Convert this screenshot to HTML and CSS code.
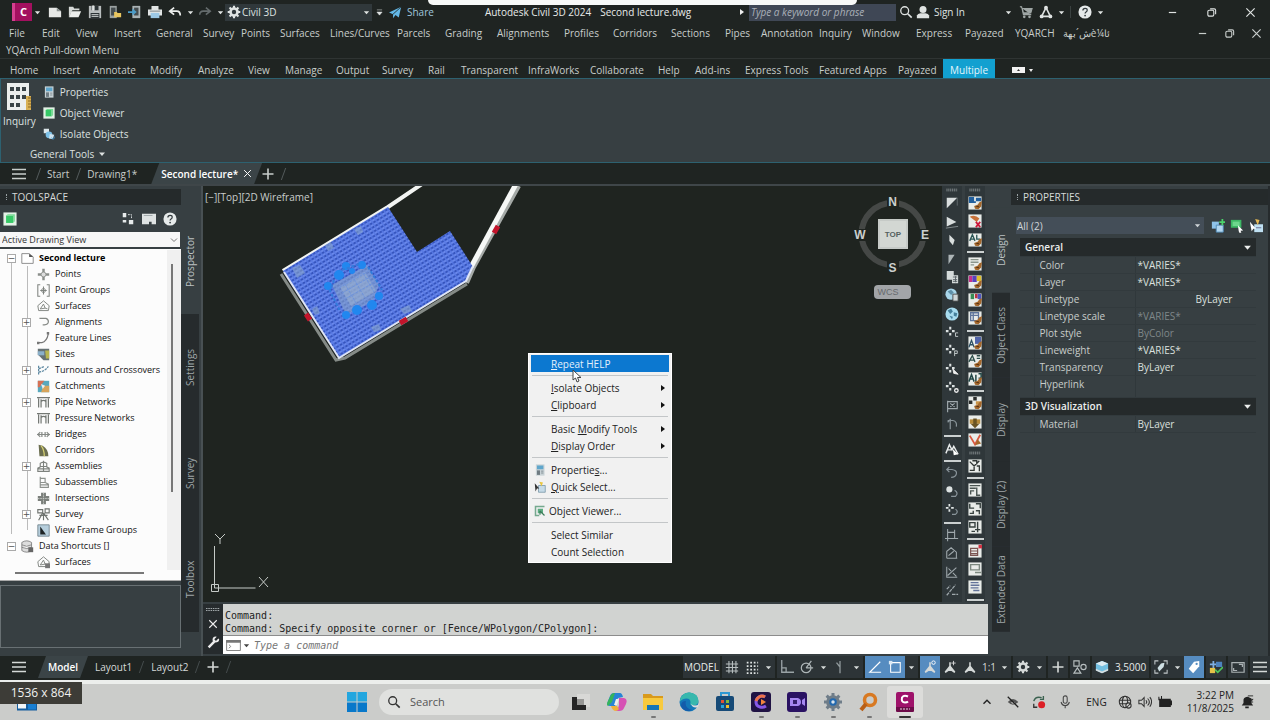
FILE: index.html
```html
<!DOCTYPE html>
<html lang="en">
<head>
<meta charset="utf-8">
<title>Autodesk Civil 3D 2024 - Second lecture.dwg</title>
<link rel="stylesheet" href="styles.css">
</head>
<body>
<svg class="defs" aria-hidden="true">
  <symbol id="caret" viewBox="0 0 8 8"><path d="M1 2.500h6L4 6z" fill="currentColor"/></symbol>
  <symbol id="x" viewBox="0 0 12 12"><path d="M1.500 1.500l9 9m0-9l-9 9" stroke="currentColor" stroke-width="1.300"/></symbol>
  <symbol id="min" viewBox="0 0 12 12"><path d="M2 6h8" stroke="currentColor" stroke-width="1.300"/></symbol>
  <symbol id="restore" viewBox="0 0 12 12"><g fill="none" stroke="currentColor" stroke-width="1.200"><rect x="2" y="3.500" width="6.500" height="6.500" rx="1.500"/><path d="M4.500 2h4.500q1.500 0 1.500 1.500v4.500"/></g></symbol>
  <symbol id="plus" viewBox="0 0 12 12"><path d="M6 .5v11M.5 6h11" stroke="currentColor" stroke-width="1.600"/></symbol>
  <symbol id="burger" viewBox="0 0 14 12"><path d="M0 1.500h14M0 6h14M0 10.500h14" stroke="currentColor" stroke-width="1.400"/></symbol>
  <symbol id="gear" viewBox="0 0 16 16"><circle cx="8" cy="8" r="4" fill="none" stroke="currentColor" stroke-width="3"/><g stroke="currentColor" stroke-width="2.400"><path d="M8 .8v3M8 12.200v3M.8 8h3M12.200 8h3M2.900 2.900l2 2M11.100 11.100l2 2M13.100 2.900l-2 2M4.900 11.100l-2 2"/></g></symbol>
  <symbol id="lens" viewBox="0 0 16 16"><circle cx="6.500" cy="6.500" r="4.500" fill="none" stroke="currentColor" stroke-width="1.500"/><path d="M10 10l4.500 4.500" stroke="currentColor" stroke-width="1.900"/></symbol>
  <symbol id="help" viewBox="0 0 16 16"><circle cx="8" cy="8" r="7.500" fill="#e6eaea"/><path d="M5.600 6.300q0-2.500 2.500-2.500t2.400 2.200q0 1.200-1.300 2-1.100.7-1.100 1.600" fill="none" stroke="#30383b" stroke-width="1.400"/><circle cx="8.100" cy="12" r="1" fill="#30383b"/></symbol>
  <symbol id="props" viewBox="0 0 16 16"><rect x="2.500" y=".5" width="11.500" height="15" fill="#c8d2d6"/><rect x="4" y="2" width="8.500" height="5" fill="#5fa6cc"/><rect x="4" y="8.500" width="4" height="6" fill="#6f7b82"/><path d="M9.500 9.500h3M9.500 12h3" stroke="#6f7b82"/></symbol>
  <symbol id="viewer" viewBox="0 0 16 16"><rect x=".5" y=".5" width="15" height="15" fill="#e3f1e6"/><rect x="3.500" y="4" width="8" height="8.500" fill="#37c967"/><path d="M3.500 4l2-1.500h8v8l-2 2V4z" fill="#78db95"/></symbol>
  <symbol id="grip" viewBox="0 0 14 5"><path d="M0 1.500h14M0 3.500h14" stroke="#a2a9ab" stroke-width="1" stroke-dasharray="1.500 .8"/></symbol>
  <symbol id="tile" viewBox="0 0 16 16"><rect x=".5" y=".5" width="15" height="15" fill="#e9ece9"/></symbol>
  <symbol id="brush" viewBox="0 0 16 16"><path d="M16 6l-3 1-2 3-4 1.500 1 3 4 .5 3-3z" fill="#a5682c"/><path d="M8 12l4-1 1 2" fill="#593414"/></symbol>
  <symbol id="person" viewBox="0 0 16 16"><path d="M8 2.500v5M8 7l-5.500 7 5.500-3.500 5.500 3.500L8 7" fill="currentColor" stroke="currentColor" stroke-width="1.800"/></symbol>
  <symbol id="star" viewBox="0 0 16 16"><path d="M6 2v3M6 9v3M1 7h3M8 7h3" stroke="#dce2e2" stroke-width="2.400"/></symbol>
  <symbol id="pipe" viewBox="0 0 16 16"><path d="M0 2h16M2 3v11M5 4v10M11 4v10M14 3v11M5 7q3-3 6 0" fill="none" stroke="#747874" stroke-width="1.500"/></symbol>
  <symbol id="house" viewBox="0 0 16 16"><path d="M2 13l-1-6 7-6 7 6-1 6zM4 11l4-6 2 5 3 1M4 11l6-1" fill="none" stroke="#858985" stroke-width="1.200"/></symbol>
</svg>

<header class="titlebar">
  <button class="logo" aria-label="Application menu">C</button>
  <button class="cr"><svg><use href="#caret"/></svg></button>
  <div class="quick">
    <button aria-label="New"><svg viewBox="0 0 16 16"><path d="M1 3h9l5 4v7H1z" fill="#e6e8e6"/><path d="M10 3v4h5" fill="#8b9291"/></svg></button>
    <button aria-label="Open"><svg viewBox="0 0 16 16"><path d="M1 14V2h5l1 2h6v2H5z" fill="#d6dad8"/><path d="M4 7h11l-3 7H1z" fill="#eceeec"/></svg></button>
    <button aria-label="Save"><svg viewBox="0 0 16 16"><path d="M1 1h14v14H1z" fill="#b8bdbd"/><path d="M4 1h8v5H4zM3 9h10v6H3z" fill="#2c3335"/><path d="M5 1h2v5H5zM4 11h8M4 13h8" stroke="#dfe2e1" fill="#dfe2e1"/></svg></button>
    <button aria-label="Open from mobile"><svg viewBox="0 0 16 16"><path d="M2 1h8v14H2z" fill="#9ba2a2"/><path d="M3.500 3h5v9h-5z" fill="#444c4f"/><path d="M7 8h3l1 1h4v5H7z" fill="#e9c65f"/></svg></button>
    <button aria-label="Save to mobile"><svg viewBox="0 0 16 16"><path d="M5 1h9v14H5z" fill="#aab2b4"/><path d="M7 3h5v9H7z" fill="#444c4f"/><path d="M0 7h5V4l5 4-5 4V9H0z" fill="#4b9cc8"/></svg></button>
    <button aria-label="Plot"><svg viewBox="0 0 16 16"><path d="M4 1h8v4H4zM0 5h16v7H0z" fill="#e2e5e5"/><path d="M3 9h10v6H3z" fill="#9cc9e6"/><path d="M2 7h12" stroke="#707a7f"/></svg></button>
    <button aria-label="Undo"><svg viewBox="0 0 16 16"><path d="M7 3L2 7l5 4M2 7h8q4 0 4 5" fill="none" stroke="#eceeed" stroke-width="2"/></svg></button>
  </div>
  <button class="cr"><svg><use href="#caret"/></svg></button>
  <button class="ib dim" aria-label="Redo"><svg viewBox="0 0 16 16"><path d="M9 3l5 4-5 4M14 7H6q-4 0-4 4" fill="none" stroke="currentColor" stroke-width="1.800"/></svg></button>
  <button class="cr"><svg><use href="#caret"/></svg></button>
  <label class="space"><svg><use href="#gear"/></svg><select aria-label="Workspace"><option>Civil 3D</option></select><svg class="sc"><use href="#caret"/></svg></label>
  <button class="cr wide" aria-label="Customize"><svg viewBox="0 0 8 8"><path d="M1 1h6M1 3.500h6L4 7z" fill="currentColor" stroke="currentColor" stroke-width=".6"/></svg></button>
  <button class="share"><svg viewBox="0 0 16 16"><path d="M0 8L15 1l-3 13-4-3-3 4v-5z" fill="#63b9e8"/><path d="M15 1L5 10" stroke="#1f2422"/></svg>Share</button>
  <h1><span>Autodesk Civil 3D 2024</span><span>Second lecture.dwg</span></h1>
  <svg class="rt" viewBox="0 0 8 8"><path d="M2 1l4 3-4 3z" fill="#eee"/></svg>
  <input class="find" type="text" placeholder="Type a keyword or phrase" aria-label="Search help">
  <button class="ib" aria-label="Search"><svg><use href="#lens"/></svg></button>
  <button class="sign"><svg viewBox="0 0 16 16"><circle cx="8" cy="5" r="4" fill="currentColor"/><path d="M1 15v-3q1-2 4-2.500h6q3 .5 4 2.500v3z" fill="currentColor"/></svg>Sign In<svg class="sc"><use href="#caret"/></svg></button>
  <button class="ib" aria-label="Store"><svg viewBox="0 0 16 16"><path d="M1 2h2l2 9h9M4 4h11l-1.500 5H5z" fill="#9fa6a5" stroke="#9fa6a5" stroke-width="1.200"/><circle cx="6" cy="13.500" r="1.500" fill="#9fa6a5"/><circle cx="12" cy="13.500" r="1.500" fill="#9fa6a5"/></svg></button>
  <button class="ib" aria-label="Apps"><svg viewBox="0 0 16 16"><path d="M8 3L3 13h10z" fill="none" stroke="currentColor" stroke-width="1.800"/><circle cx="8" cy="3" r="2.200" fill="currentColor"/><circle cx="3" cy="13" r="2.200" fill="currentColor"/><circle cx="13" cy="13" r="2.200" fill="currentColor"/></svg></button>
  <button class="cr"><svg><use href="#caret"/></svg></button>
  <i class="bar"></i>
  <button class="ib" aria-label="Help"><svg><use href="#help"/></svg></button>
  <button class="cr"><svg><use href="#caret"/></svg></button>
  <div class="win"><button aria-label="Minimize"><svg><use href="#min"/></svg></button><button aria-label="Restore"><svg><use href="#restore"/></svg></button><button aria-label="Close"><svg><use href="#x"/></svg></button></div>
</header>
<div class="notch"></div>

<nav class="menus">
  <button>File</button><button>Edit</button><button>View</button><button>Insert</button><button>General</button><button>Survey</button><button>Points</button><button>Surfaces</button><button>Lines/Curves</button><button>Parcels</button><button>Grading</button><button>Alignments</button><button>Profiles</button><button>Corridors</button><button>Sections</button><button>Pipes</button><button>Annotation</button><button>Inquiry</button><button>Window</button><button>Express</button><button>Payazed</button><button>YQARCH</button><button><span dir="rtl">ئا¼èش´بهة</span></button>
  <div class="docwin"><button aria-label="Minimize drawing"><svg><use href="#min"/></svg></button><button aria-label="Restore drawing"><svg><use href="#restore"/></svg></button><button aria-label="Close drawing"><svg><use href="#x"/></svg></button></div>
</nav>
<nav class="menus2"><button>YQArch Pull-down Menu</button></nav>

<nav class="ribtabs">
  <button>Home</button><button>Insert</button><button>Annotate</button><button>Modify</button><button>Analyze</button><button>View</button><button>Manage</button><button>Output</button><button>Survey</button><button>Rail</button><button>Transparent</button><button>InfraWorks</button><button>Collaborate</button><button>Help</button><button>Add-ins</button><button>Express Tools</button><button>Featured Apps</button><button>Payazed</button><button class="on">Multiple</button><button class="more" aria-label="Ribbon display"><svg viewBox="0 0 22 8"><path d="M0 1h13v6H0z" fill="#f2f2f2"/><path d="M5 5h3L6.500 3z" fill="#333"/><path d="M17 3h4l-2 3z" fill="#eee"/></svg></button>
</nav>

<section class="ribbon">
  <div class="tools">
    <button class="inq"><svg viewBox="0 0 24 28"><path d="M0 0h22v27H0z" fill="#eceeed"/><path d="M3 4h4v4H3zM9 4h4v4H9zM15 4h4v4h-4zM3 12h4v4H3zM9 12h4v4H9zM15 12h4v4h-4zM3 20h4v4H3zM9 20h4v4H9z" fill="#3a4346"/><path d="M19 13h5v14h-5z" fill="#d9b054"/><path d="M21 15h3M21 18h3M21 21h3M21 24h3" stroke="#8f6a20"/></svg>Inquiry</button>
    <div class="list">
      <button><svg><use href="#props"/></svg>Properties</button>
      <button><svg><use href="#viewer"/></svg>Object Viewer</button>
      <button><svg viewBox="0 0 16 16"><path d="M1 1h7v6H1z" fill="#dce6ea"/><circle cx="8" cy="9" r="4.500" fill="#7cc0e6"/><path d="M9 8l6 1-2 6-5-1z" fill="#cfe4f0"/><path d="M11 13l3 2 2-4" stroke="#3693cf" fill="none"/></svg>Isolate Objects</button>
    </div>
  </div>
  <button class="gt">General Tools <svg><use href="#caret"/></svg></button>
</section>

<nav class="filetabs">
  <button class="bg" aria-label="Tabs menu"><svg><use href="#burger"/></svg></button>
  <i class="sl"></i><button>Start</button><i class="sl"></i><button class="d1">Drawing1*</button>
  <div class="cur"><button>Second lecture*</button><button aria-label="Close tab"><svg><use href="#x"/></svg></button></div>
  <button class="add" aria-label="New tab"><svg><use href="#plus"/></svg></button><i class="sl"></i>
</nav>

<main class="work">
  <section class="toolspace">
    <h2>TOOLSPACE</h2>
    <div class="tsbar">
      <button aria-label="Drawing"><svg><use href="#viewer"/></svg></button>
      <button class="r" aria-label="Item view"><svg viewBox="0 0 16 16"><path d="M2 1h4v5H2zM9 9h5v5H9zM2 9h4v3H2z" fill="#e6eaea"/><path d="M8 3h4v4" fill="none" stroke="#e6eaea" stroke-dasharray="2 1"/></svg></button>
      <button aria-label="Panorama"><svg viewBox="0 0 16 16"><path d="M0 2h16v12h-5v-3H8v3H0z" fill="#dfe3e3"/><path d="M2 4h10" stroke="#9aa2a5"/></svg></button>
      <button aria-label="Help"><svg><use href="#help"/></svg></button>
    </div>
    <label class="tsview"><select aria-label="View"><option>Active Drawing View</option></select><svg viewBox="0 0 8 8"><path d="M1 2.500l3 3 3-3" fill="none" stroke="#777"/></svg></label>
    <div class="treebox">
      <ul class="tree">
        <li class="root b"><button class="tg" aria-label="Collapse">−</button><svg viewBox="0 0 16 16"><path d="M1 2h9l5 4v8H1z" fill="#fff" stroke="#777"/><path d="M10 2v4h5z" fill="#555"/></svg>Second lecture</li>
        <li><svg viewBox="0 0 16 16"><path d="M8 1v14M1 8h14" stroke="#8a8e8a" stroke-width="3"/><circle cx="8" cy="8" r="3" fill="#ddd" stroke="#8a8e8a"/></svg>Points</li>
        <li><svg viewBox="0 0 16 16"><path d="M4 1H1v14h3M12 1h3v14h-3M8 3v10M4 8h8" fill="none" stroke="#808480" stroke-width="1.300"/><circle cx="8" cy="8" r="2.500" fill="none" stroke="#808480"/></svg>Point Groups</li>
        <li><svg><use href="#house"/></svg>Surfaces</li>
        <li class="k"><button class="tg" aria-label="Expand">+</button><svg viewBox="0 0 16 16"><path d="M3 3h8q3 1 3 4t-5 4H7" fill="none" stroke="#858985" stroke-width="1.500"/></svg>Alignments</li>
        <li><svg viewBox="0 0 16 16"><path d="M1 13h5q6-1 8-11" fill="none" stroke="#777" stroke-width="1.500"/><path d="M0 12h3v3H0zM12 0h3v3h-3z" fill="#777"/></svg>Feature Lines</li>
        <li><svg viewBox="0 0 16 16"><path d="M1 1h14v14H8L1 8z" fill="#667173"/><path d="M1 4h8v5H1z" fill="#8bb0ca"/><path d="M10 3h5v10h-4z" fill="#b9b64f"/></svg>Sites</li>
        <li class="k"><button class="tg" aria-label="Expand">+</button><svg viewBox="0 0 16 16"><path d="M2 2v12M2 10q8-1 12-7M2 6l7-3" fill="none" stroke="#5d88a1" stroke-width="1.500" stroke-dasharray="3 1"/></svg>Turnouts and Crossovers</li>
        <li><svg viewBox="0 0 16 16"><path d="M1 1h14v14H1z" fill="#58a8bd"/><path d="M1 1h8L3 9H1z" fill="#d77154"/><path d="M8 7h7v8H5z" fill="#d7a45b"/><path d="M5 5l5 2-3 4z" fill="#eee"/></svg>Catchments</li>
        <li class="k"><button class="tg" aria-label="Expand">+</button><svg><use href="#pipe"/></svg>Pipe Networks</li>
        <li><svg><use href="#pipe"/></svg>Pressure Networks</li>
        <li><svg viewBox="0 0 16 16"><path d="M0 8h16M4 5L1 8l3 3M12 5l3 3-3 3M6 5v6M10 5v6" fill="none" stroke="#858985" stroke-width="1.500"/></svg>Bridges</li>
        <li><svg viewBox="0 0 16 16"><path d="M2 1l5 1q7 4 7 13H3z" fill="#6b6e50"/><path d="M5 2q4 5 4 13" fill="none" stroke="#d4cf72" stroke-width="1.500"/></svg>Corridors</li>
        <li class="k"><button class="tg" aria-label="Expand">+</button><svg viewBox="0 0 16 16"><path d="M1 14v-4l4-2h6l4 2v4zM8 1v13M4 8V4l4-2 4 2v4M1 11h14" fill="none" stroke="#7d817d" stroke-width="1.400"/></svg>Assemblies</li>
        <li><svg viewBox="0 0 16 16"><path d="M4 1v13h10v-4l-4-2V3H4M4 8h6M4 11h10" fill="none" stroke="#8d918d" stroke-width="1.400"/></svg>Subassemblies</li>
        <li><svg viewBox="0 0 16 16"><path d="M5 1h6v4h4v6h-4v4H5v-4H1V5h4z" fill="#7b7f7b"/><path d="M8 1v14M1 8h14" stroke="#c9ccc9" stroke-dasharray="2 1"/></svg>Intersections</li>
        <li class="k"><button class="tg" aria-label="Expand">+</button><svg viewBox="0 0 16 16"><path d="M1 2h6v4H1zM10 1h5v5h-5zM7 6l-5 9M8 6v9M8 6l6 9M3 9h10" fill="none" stroke="#6f736f" stroke-width="1.400"/></svg>Survey</li>
        <li><svg viewBox="0 0 16 16"><path d="M1 1h14v14H1z" fill="#b6cedc" stroke="#6b7e88"/><path d="M4 3v10h7z" fill="#1e2426"/></svg>View Frame Groups</li>
        <li class="root"><button class="tg" aria-label="Collapse">−</button><svg viewBox="0 0 16 16"><path d="M1 3q6-4 12 0v10q-6 4-12 0zM1 6q6 3 12 0M1 9q6 3 12 0" fill="#ddd" stroke="#777"/><path d="M9 9h6v6H9z" fill="#666"/></svg>Data Shortcuts []</li>
        <li><svg viewBox="0 0 16 16"><use href="#house"/><path d="M10 9h6v6h-6z" fill="#777"/></svg>Surfaces</li>
      </ul>
      <i class="vbar"></i><i class="hbar"></i>
    </div>
    <div class="preview"></div>
  </section>
  <nav class="vtabs left"><button class="on">Prospector</button><button>Settings</button><button>Survey</button><button>Toolbox</button></nav>

  <div class="center">
    <div class="top">
      <section class="canvas">
        <svg class="drawing" viewBox="203 186 739 415" preserveAspectRatio="xMinYMin meet">
          <defs><pattern id="hatch" width="4" height="4" patternUnits="userSpaceOnUse" patternTransform="rotate(-31)"><path d="M0 0h4v4H0z" fill="#2a45a8"/><path d="M0 0h4v2H0z" fill="#7590ea"/><path d="M0 0h1.500v4H0z" fill="#5b7ae0"/></pattern></defs>
          <path d="M283 271L388 207L422 184" fill="none" stroke="#f2f4f2" stroke-width="4"/>
          <path d="M281 274L336 360L345 358L467 284" fill="none" stroke="#858b87" stroke-width="3"/>
          <path d="M519 186L474 267L467 283" fill="none" stroke="#a5aaa7" stroke-width="4"/>
          <path d="M516 184L471 267" stroke="#f6f8f6" stroke-width="5"/>
          <path d="M283 271L388 207L417 252L450 231L473 267L466 281L339 358z" fill="url(#hatch)"/>
          <path d="M283 271L388 207L417 252L450 231L473 267L466 281L339 358z" fill="#4f78f0" fill-opacity=".3"/>
          <path d="M284 272L339 358L466 281L473 266" fill="none" stroke="#dfe5f5" stroke-width="2"/>
          <g fill="#8ba7c8" opacity=".55"><path d="M292 268l8-3 5 8-8 5zM325 245l6-3 3 6-6 3zM354 229l7-3 2 6-5 3zM312 309l5-3 3 7-5 2zM371 327l8-3 2 6-7 2zM400 309l9-4 3 6-8 3z"/><path d="M332 285l35-20 12 20-6 16-27 14z"/></g>
          <path d="M340 287l25-15 11 19-25 15z" fill="#9cb2cf" opacity=".55"/>
          <path d="M339 288l30-17M342 293l30-17M345 299l30-17M345 284l11 19M354 279l11 19M363 273l11 19" stroke="#6d93dd" stroke-dasharray="3 1"/>
          <g fill="#2187ef"><circle cx="328" cy="286" r="4"/><circle cx="339" cy="275" r="5"/><circle cx="346" cy="266" r="4"/><circle cx="352" cy="271" r="3"/><circle cx="362" cy="265" r="4"/><circle cx="346" cy="315" r="4"/><circle cx="357" cy="310" r="5"/><circle cx="372" cy="305" r="5"/><circle cx="379" cy="296" r="4"/></g>
          <g fill="none" stroke="#317bdc" stroke-width="2" stroke-dasharray="3 2"><path d="M334 280l-4 11 10 20M368 267l7 11 7 12M342 270l17-6"/></g>
          <g stroke="#c2142b" stroke-width="5"><path d="M498 226l-4 7M400 323l7-4M306 314l4 6"/></g>
          <circle cx="892.500" cy="234" r="31" fill="none" stroke="#454846" stroke-width="6"/>
          <path d="M878 219h30v30h-30z" fill="#c6cac7"/><path d="M880 221h26v26h-26z" fill="#d3d7d3"/>
          <rect x="874" y="285" width="37" height="14" rx="4" fill="#a2a5a8"/>
          <g class="compass"><path d="M887 196h12v12h-12zM887 261h12v12h-12zM854 229h13v12h-13zM919 229h12v12h-12z" fill="#1f2420"/><text x="892.500" y="206">N</text><text x="892.500" y="272">S</text><text x="860" y="239">W</text><text x="925" y="239">E</text></g>
          <text class="cube" x="893" y="237">TOP</text><text class="wcs" x="888" y="295">WCS</text>
          <path d="M214.500 546v42h41M211.500 584.500h7v7h-7z" fill="none" stroke="#c5cac7"/>
          <path d="M215 534l5 5 5-5M220 539v5M259 577l9 10M268 577l-9 10" fill="none" stroke="#c5cac7"/>
        </svg>
        <div class="vp"><button>[−]</button><button>[Top]</button><button>[2D Wireframe]</button></div>
      </section>

      <div class="vt">
        <svg class="g"><use href="#grip"/></svg>
        <svg viewBox="0 0 16 16"><path d="M2 2h12L2 14z" fill="#d9dede"/><path d="M14 2v9" stroke="#666f72"/></svg>
        <svg viewBox="0 0 16 16"><path d="M2 2l11 6L2 13z" fill="#d9dede"/><path d="M1 15L15 13" stroke="#8d9597"/></svg>
        <svg viewBox="0 0 16 16"><path d="M5 2l6 6-2 6-4-5z" fill="#d9dede"/></svg>
        <svg viewBox="0 0 16 16"><path d="M4 3h7L4 14z" fill="#adb5b7"/></svg>
        <svg viewBox="0 0 16 16"><path d="M2 1h8v5h5v9H8v-4H2z" fill="#d4dada"/><path d="M9 8h5M9 11h5M9 13h5M12 7v7" stroke="#545d61"/></svg>
        <svg viewBox="0 0 16 16"><circle cx="7" cy="7" r="6.500" fill="#a9d6ea"/><path d="M3 4l4-2 3 3-3 3z" fill="#5e8fa8"/><path d="M9 7h6v8H9z" fill="#cfd6d8" stroke="#444"/></svg>
        <svg viewBox="0 0 16 16"><circle cx="8" cy="8" r="7.500" fill="#a8dcef"/><path d="M3 4l4-2 2 3-3 3zM10 6l4 1-1 4-3-1zM5 10l4 1-1 3z" fill="#457f9b"/></svg>
        <svg viewBox="0 0 16 16"><use href="#star"/><path d="M15 9h-3v4h3" fill="none" stroke="#ccd2d3"/></svg>
        <svg viewBox="0 0 16 16"><use href="#star"/><path d="M11 15V9h3v3h-3" fill="none" stroke="#ccd2d3"/></svg>
        <svg viewBox="0 0 16 16"><use href="#star"/><path d="M9 8l6 6-5-1z" fill="#eee" stroke="#eee"/></svg>
        <svg viewBox="0 0 16 16"><use href="#star"/><circle cx="13" cy="12" r="2" fill="none" stroke="#eee" stroke-width="1.500"/></svg>
        <svg viewBox="0 0 16 16"><path d="M3 2v13M3 3h11v8H3M6 5l5 4M11 5L6 9" fill="none" stroke="#a0a9ad" stroke-width="1.300"/></svg>
        <svg viewBox="0 0 16 16"><path d="M3 4h6q5 1 4 7M6 2v12M3 6l3-3" fill="none" stroke="#89949a" stroke-width="1.400"/></svg>
        <i></i>
        <svg viewBox="0 0 16 16"><path d="M1 13l4-10 3 6 2-4 5 9M2 9h5" fill="none" stroke="#e9eded" stroke-width="1.600"/><path d="M9 8l6 6-5 1z" fill="#fff"/></svg>
        <i></i>
        <svg viewBox="0 0 16 16"><path d="M3 4h5q6 1 5 5t-6 4M5 1L2 4l3 3" fill="none" stroke="#89949a" stroke-width="1.400"/></svg>
        <svg viewBox="0 0 16 16"><circle cx="5" cy="5" r="3.500" fill="#dce2e2"/><path d="M11 6q5 3 1 7H7" fill="none" stroke="#89949a" stroke-width="1.400"/></svg>
        <svg viewBox="0 0 16 16"><path d="M5 1v3M5 7v3M1 5.500h3M7 5.500h3" stroke="#e0e5e5" stroke-width="2"/><path d="M12 7q4 3 0 6H8" fill="none" stroke="#89949a" stroke-width="1.400"/></svg>
        <i></i>
        <svg viewBox="0 0 16 16"><path d="M3 1v14M0 12h15M3 5h8v7M11 2v3" fill="none" stroke="#a0a9ad" stroke-width="1.200"/></svg>
        <svg viewBox="0 0 16 16"><path d="M2 14V6l5-4 6 5v7M2 14h12M4 11l6-5" fill="none" stroke="#a0a9ad" stroke-width="1.200"/></svg>
        <svg viewBox="0 0 16 16"><path d="M2 2v12h12M3 12L13 3M4 4l3 3M9 9l4 4" fill="none" stroke="#a0a9ad" stroke-width="1.200"/></svg>
        <svg viewBox="0 0 16 16"><path d="M2 14L12 2M2 7l4-4M8 13h7" fill="none" stroke="#a0a9ad" stroke-width="1.400" stroke-dasharray="4 1"/></svg>
      </div>
      <div class="vt">
        <svg class="g"><use href="#grip"/></svg>
        <svg viewBox="0 0 16 16"><use href="#tile"/><path d="M1 1h6v5h8V2H9v6H1z" fill="#225f9d"/><use href="#brush"/></svg>
        <svg viewBox="0 0 16 16"><use href="#tile"/><path d="M2 3q6-3 11 2l-3 4z" fill="#c8723a"/><path d="M9 9l5 6M14 9l-5 6" stroke="#cc1739" stroke-width="2"/></svg>
        <svg viewBox="0 0 16 16"><use href="#tile"/><path d="M2 9l3-7 3 7M3 7h4M10 2v5h4" fill="none" stroke="#2a5554" stroke-width="1.500"/><use href="#brush"/></svg>
        <i></i>
        <svg viewBox="0 0 16 16"><use href="#tile"/><path d="M3 3h9M3 6h9M3 9h4" stroke="#8a958d" stroke-width="1.500"/><use href="#brush"/></svg>
        <svg viewBox="0 0 16 16"><use href="#tile"/><path d="M1 1h4v7H1z" fill="#c5308b"/><path d="M5 1h5v7H5z" fill="#5641bd"/><path d="M10 1h5v6h-5z" fill="#dfbf2b"/><use href="#brush"/></svg>
        <svg viewBox="0 0 16 16"><use href="#tile"/><path d="M3 1h4v6H3z" fill="#398c55"/><path d="M8 1h3v5H8z" fill="#be3340"/><path d="M11 1h4v6h-4z" fill="#4e56bd"/><use href="#brush"/></svg>
        <svg viewBox="0 0 16 16"><use href="#tile"/><path d="M3 2h9v9H3zM3 5h9M6 2v9" fill="none" stroke="#5f759b" stroke-width="1.500"/><use href="#brush"/></svg>
        <i></i>
        <svg viewBox="0 0 16 16"><use href="#tile"/><path d="M1 13l3-8 3 8M2 10h4" fill="none" stroke="#2e4f62" stroke-width="1.500"/><path d="M8 1h7v8H8z" fill="#5265a9"/><use href="#brush"/></svg>
        <svg viewBox="0 0 16 16"><use href="#tile"/><path d="M1 9l4-7 3 7M2 7h5M10 2h4M10 5h4" fill="none" stroke="#2e4f4b" stroke-width="1.500"/><use href="#brush"/></svg>
        <svg viewBox="0 0 16 16"><use href="#tile"/><path d="M1 11l3-8 3 8M2 8h4M9 3v9M12 2h3v5h-3" fill="none" stroke="#234746" stroke-width="1.700"/><use href="#brush"/></svg>
        <i></i>
        <svg viewBox="0 0 16 16"><use href="#tile"/><path d="M1 5h4v4H1zM6 1h4v4H6z" fill="#2a2d2c"/><path d="M9 6h6v4H9z" fill="#c99347"/><use href="#brush"/></svg>
        <svg viewBox="0 0 16 16"><use href="#tile"/><path d="M2 5h12v5H2z" fill="#b68b3a"/><path d="M6 4h4v6h3l-5 5-5-5h3z" fill="#6b5523"/></svg>
        <svg viewBox="0 0 16 16"><use href="#tile"/><path d="M2 3l6 10L14 2" fill="none" stroke="#d8583f" stroke-width="2"/><path d="M8 14l3-7 4 5z" fill="#a5682c"/></svg>
        <svg class="g"><use href="#grip"/></svg>
        <svg viewBox="0 0 16 16"><use href="#tile"/><path d="M2 3l5 5 6-6M2 13h5V9M10 8h3v6M5 2h5v4" fill="none" stroke="#303634" stroke-width="1.500"/></svg>
        <i></i>
        <svg viewBox="0 0 16 16"><use href="#tile"/><path d="M2 3h12M2 6h7M3 13V9h4M10 5v9h4" fill="none" stroke="#4b5552" stroke-width="1.600"/></svg>
        <svg viewBox="0 0 16 16"><use href="#tile"/><path d="M2 2v5h5M9 2h5v5M2 13h4v-3M9 10h4v4" fill="none" stroke="#394341" stroke-width="1.600"/></svg>
        <svg viewBox="0 0 16 16"><use href="#tile"/><path d="M2 3h6v5H2zM11 2v12M4 13h4M8 11h6" fill="none" stroke="#37413f" stroke-width="1.600"/></svg>
        <i></i>
        <svg viewBox="0 0 16 16"><use href="#tile"/><path d="M3 5h8v8H3zM3 8h8M3 11h8" fill="none" stroke="#7b5551" stroke-width="1.400"/><path d="M12 1h4v4h-4z" fill="#d33344"/></svg>
        <svg viewBox="0 0 16 16"><use href="#tile"/><path d="M3 3h10v6H3zM8 12h7" fill="none" stroke="#7d8980" stroke-width="1.600"/></svg>
        <svg viewBox="0 0 16 16"><use href="#tile"/><path d="M3 3h9M3 6h10M3 9h9M6 12h7" stroke="#64749a" stroke-width="1.600"/></svg>
        <i></i>
      </div>
    </div>
    <section class="cmd">
      <div class="side"><svg class="g"><use href="#grip"/></svg><button aria-label="Close command line"><svg><use href="#x"/></svg></button><button aria-label="Customize command line"><svg viewBox="0 0 16 16"><path d="M2 14l7-7" stroke="#eee" stroke-width="3"/><path d="M14 3l-3 3-2-2 3-3q-4-1-5 2-1 4 3 5 5 0 5-4z" fill="#eee"/></svg></button></div>
      <div class="lines">
        <div class="log"><p>Command:</p><p>Command: Specify opposite corner or [Fence/WPolygon/CPolygon]:</p></div>
        <label class="in"><svg class="term" viewBox="0 0 16 12"><path d="M.5.500h15v11H.5z" fill="#fff" stroke="#777"/><path d="M0 0h16v3H0z" fill="#777"/><path d="M3 5l2 2-2 2" fill="none" stroke="#777"/></svg><svg class="sc"><use href="#caret"/></svg><input type="text" placeholder="Type a command" aria-label="Command"></label>
      </div>
    </section>
  </div>

  <nav class="vtabs right"><button class="on">Design</button><button>Object Class</button><button>Display</button><button>Display (2)</button><button>Extended Data</button></nav>
  <section class="props">
    <h2>PROPERTIES</h2>
    <div class="sel">
      <label><select aria-label="Selection"><option>All (2)</option></select><svg class="sc"><use href="#caret"/></svg></label>
      <button aria-label="Toggle pickadd"><svg viewBox="0 0 16 16"><path d="M1 3h8v8H1z" fill="#8fc3ea"/><path d="M6 7h8v8H6z" fill="#b2d7f1" stroke="#4d87b4"/><path d="M13 0v7M9.500 3.500h7" stroke="#4bd36b" stroke-width="2"/></svg></button>
      <button aria-label="Select objects"><svg viewBox="0 0 16 16"><path d="M1 1h12v9H1z" fill="#3db865"/><path d="M3 3h8v5H3z" fill="#6dd68c"/><path d="M9 7l6 6-3 .3 1 2.200-2 .5-1-2z" fill="#fff"/></svg></button>
      <button aria-label="Quick select"><svg viewBox="0 0 16 16"><path d="M6 6h10v9H6z" fill="#bfe0f2"/><path d="M7 0l5 1-2 6z" fill="#e5b853"/><path d="M1 3l7 8H5l-2 3z" fill="#fff"/><path d="M8 10h6" stroke="#668"/></svg></button>
    </div>
    <table>
      <colgroup><col class="c1"><col class="c2"><col></colgroup>
      <tbody><tr class="hd"><th colspan="3">General<svg><use href="#caret"/></svg></th></tr>
      <tr><td></td><th>Color</th><td>*VARIES*</td></tr>
      <tr><td></td><th>Layer</th><td>*VARIES*</td></tr>
      <tr><td></td><th>Linetype</th><td class="lt">ByLayer</td></tr>
      <tr><td></td><th>Linetype scale</th><td class="off">*VARIES*</td></tr>
      <tr><td></td><th>Plot style</th><td class="off">ByColor</td></tr>
      <tr><td></td><th>Lineweight</th><td>*VARIES*</td></tr>
      <tr><td></td><th>Transparency</th><td>ByLayer</td></tr>
      <tr class="last"><td></td><th>Hyperlink</th><td></td></tr></tbody>
      <tbody><tr class="hd"><th colspan="3">3D Visualization<svg><use href="#caret"/></svg></th></tr>
      <tr><td></td><th>Material</th><td>ByLayer</td></tr></tbody>
    </table>
  </section>
</main>

<div class="ctx" role="menu">
  <button class="on" role="menuitem"><span><u>R</u>epeat HELP</span></button><hr>
  <button role="menuitem"><span><u>I</u>solate Objects</span><b></b></button>
  <button role="menuitem"><span><u>C</u>lipboard</span><b></b></button><hr>
  <button role="menuitem"><span>Basic <u>M</u>odify Tools</span><b></b></button>
  <button role="menuitem"><span><u>D</u>isplay Order</span><b></b></button><hr>
  <button role="menuitem"><svg><use href="#props"/></svg><span>Propertie<u>s</u>...</span></button>
  <button role="menuitem"><svg viewBox="0 0 16 16"><path d="M6 6h9v9H6z" fill="#c6dbe8" stroke="#7391a3"/><path d="M7 1l5 1-2 5z" fill="#e8c53e"/><path d="M1 3l6 7H4l-2 4z" fill="#333"/></svg><span><u>Q</u>uick Select...</span></button><hr>
  <button role="menuitem" class="ov"><svg viewBox="0 0 16 16"><path d="M1 2h13M2 2v12h5" stroke="#75a98e" fill="none" stroke-width="2"/><path d="M5 5h7v6H5z" fill="#5bab80"/><path d="M8 8l6 6M8 8v5" stroke="#3c7d5b" stroke-width="1.500"/></svg><span>Object Viewer...</span></button><hr>
  <button role="menuitem"><span>Select Similar</span></button>
  <button role="menuitem"><span>Count Selection</span></button>
</div>
<svg class="cursor" viewBox="0 0 10 14"><path d="M1 1v10l2.500-2 1.500 4 2-1-1.500-3.500H9z" fill="#fff" stroke="#444"/></svg>

<footer class="status">
  <div class="layouts"><button class="bg" aria-label="Layouts menu"><svg><use href="#burger"/></svg></button><button class="model">Model</button><button>Layout1</button><i class="sl"></i><button>Layout2</button><i class="sl"></i><button class="add" aria-label="New layout"><svg><use href="#plus"/></svg></button><i class="sl"></i></div>
  <div class="sb">
    <div><button class="txt">MODEL</button></div>
    <div><button aria-label="Grid"><svg viewBox="0 0 16 16"><path d="M1 4.500h14M1 8.500h14M1 12.500h14M4.500 1v14M8.500 1v14M12.500 1v14" stroke="#b9c0c2" stroke-width="1.200"/></svg></button><button aria-label="Snap"><svg viewBox="0 0 16 16"><path d="M2 3h13M2 7h13M2 11h13M2 15h13" stroke="#dfe3e3" stroke-width="1.800" stroke-dasharray="2 2"/></svg></button><button class="c"><svg><use href="#caret"/></svg></button></div>
    <div><button aria-label="Ortho"><svg viewBox="0 0 16 16"><path d="M2 0v14h14M2 9h5v5" fill="none" stroke="#9aa3a6" stroke-width="1.500"/></svg></button><button aria-label="Polar"><svg viewBox="0 0 16 16"><circle cx="7" cy="9" r="5.500" fill="none" stroke="#aeb6b8" stroke-width="1.400"/><path d="M7 9h8M7 9l6-8" stroke="#aeb6b8" stroke-width="1.400"/></svg></button><button class="c"><svg><use href="#caret"/></svg></button><button aria-label="Isodraft"><svg viewBox="0 0 16 16"><path d="M8 1v14M4 3l4 5" stroke="#8f989b" stroke-width="1.500"/></svg></button><button class="c"><svg><use href="#caret"/></svg></button></div>
    <div><button class="hl" aria-label="Object snap tracking"><svg viewBox="0 0 16 16"><path d="M14 2L2 14h13" fill="none" stroke="#fff" stroke-width="1.300"/></svg></button><button class="hl" aria-label="Object snap"><svg viewBox="0 0 16 16"><path d="M3 3h11v11H3z" fill="none" stroke="#fff" stroke-width="1.200"/><path d="M1 1h4v4H1z" fill="#dbe9f5"/></svg></button><button class="c"><svg><use href="#caret"/></svg></button></div>
    <div><button class="hl" aria-label="Annotation visibility"><svg viewBox="0 0 16 16"><use href="#person"/><circle cx="12" cy="3" r="2" fill="none" stroke="#fff"/></svg></button><button aria-label="Auto scale"><svg viewBox="0 0 16 16"><use href="#person"/><path d="M12 1v5M9.500 3.500h5" stroke="#ddd"/></svg></button><button aria-label="Annotation scale"><svg><use href="#person"/></svg></button><button class="ratio">1:1</button><button class="c"><svg><use href="#caret"/></svg></button></div>
    <div><button aria-label="Workspace switching"><svg><use href="#gear"/></svg></button><button class="c"><svg><use href="#caret"/></svg></button></div>
    <div><button class="pl" aria-label="Annotation monitor"><svg><use href="#plus"/></svg></button></div>
    <div><button aria-label="Units"><svg viewBox="0 0 16 16"><path d="M1 1h6v6H1zM5 9l4 6H1z" fill="none" stroke="#b7bec0" stroke-width="1.300"/><circle cx="12" cy="8" r="3" fill="none" stroke="#b7bec0" stroke-width="1.300"/></svg></button></div>
    <div><button aria-label="Elevation"><svg viewBox="0 0 16 16"><path d="M8 1l7 3v8l-7 3-7-3V4z" fill="#73bfe0"/><path d="M8 1l7 3-7 3-7-3z" fill="#dcebf2"/><path d="M1 10l7 3 7-3v2l-7 3-7-3z" fill="#d9dede"/></svg></button><button class="txt">3.5000</button></div>
    <div><button aria-label="Isolate"><svg viewBox="0 0 16 16"><path d="M5 1H1v4M11 1h4v4M5 15H1v-4M11 15h4v-4" fill="none" stroke="#c2c8ca" stroke-width="1.200"/><path d="M4 9l4-5 4-1-1 5-5 5z" fill="#cfe0e4"/></svg></button><button class="c"><svg><use href="#caret"/></svg></button><button class="hl" aria-label="Labels"><svg viewBox="0 0 16 16"><path d="M2 10l6-8 6-1v6l-7 8z" fill="#fff"/><circle cx="11" cy="4.500" r="1.300" fill="#568cc0"/></svg></button></div>
    <div><button aria-label="Performance"><svg viewBox="0 0 16 16"><path d="M5 1v8M1 5h12" stroke="#7daee2" stroke-width="2"/><path d="M8 2h7v6H8z" fill="#4c82bd"/><path d="M1 9h6v6H1z" fill="#e4c348"/><path d="M7 11l3 3 6-6" fill="none" stroke="#50c45b" stroke-width="2"/></svg></button></div>
    <div><button aria-label="Clean screen"><svg viewBox="0 0 16 16"><path d="M1 3h14v11H1zM9 5h4v3M7 12H3V9" fill="none" stroke="#aab1b3" stroke-width="1.400"/></svg></button></div>
    <div><button aria-label="Customization"><svg><use href="#burger"/></svg></button></div>
  </div>
</footer>

<footer class="taskbar">
  <span class="res">1536 x 864</span><svg class="widget" viewBox="0 0 20 8"><path d="M0 0h20v8H0z" fill="#155d9e"/><path d="M1 0h8v6H1z" fill="#f1f5f8"/><path d="M11 0h8v7h-8z" fill="#197fd3"/></svg>
  <div class="apps">
    <button aria-label="Start"><svg viewBox="0 0 20 20"><path d="M0 0h9.500v9.500H0zM10.500 0H20v9.500h-9.500z" fill="#23a6df"/><path d="M0 10.500h9.500V20H0zM10.500 10.500H20V20h-9.500z" fill="#0878ca"/></svg></button>
    <label class="search"><svg><use href="#lens"/></svg><input type="text" placeholder="Search" aria-label="Search Windows"></label>
    <button aria-label="Task view"><svg viewBox="0 0 20 20"><path d="M6 2h13v13H6z" fill="#d8d8d6"/><path d="M1 5h5v8h9v5H1z" fill="#252525"/><path d="M6 7h7v6H6z" fill="#979795"/></svg></button>
    <button aria-label="Copilot"><svg viewBox="0 0 20 20"><path d="M7 1h6q2 0 3 4l-5 1-3 8H3q-4 0-2-5l2-5q1-3 4-3z" fill="#2884d5"/><path d="M3 5q1-4 5-4l-3 9-4 4q-2-1 0-5z" fill="#36b55a"/><path d="M12 6h5q4 1 2 6l-2 4q-1 3-5 3H8q3-1 4-6z" fill="#d651b4"/><path d="M4 14h6l2 3q-1 2-4 2-3-1-4-5z" fill="#efb23e"/><path d="M9 7h3l-2 6H7z" fill="#eee"/></svg></button>
    <button class="run" aria-label="File Explorer"><svg viewBox="0 0 20 20"><path d="M0 2h8l2 2h10v14H0z" fill="#d99a1d"/><path d="M0 6h20v12H0z" fill="#f8ca3e"/><path d="M4 13h12v5H4z" fill="#1676b6"/></svg></button>
    <button aria-label="Edge"><svg viewBox="0 0 20 20"><circle cx="10" cy="10" r="9.500" fill="#1377b8"/><path d="M1 8Q3 0 11 .5q8 1 8.500 8 0 5-6 5-3 0-2-3 0-4-4-4-4 0-6.500 3z" fill="#38b8ad"/><path d="M7 9q-2 7 6 9-8 3-11-4 0-5 5-5z" fill="#135baa"/><path d="M12 12q4 3 8 0l-1 3q-5 2-7-3z" fill="#ddd"/></svg></button>
    <button aria-label="Microsoft Store"><svg viewBox="0 0 20 20"><rect x="1" y="4" width="18" height="15" rx="2" fill="#164a77"/><path d="M6 4V1h8v3" fill="none" stroke="#2d98d2" stroke-width="2"/><path d="M6 8h3v3H6z" fill="#e45231"/><path d="M11 8h3v3h-3z" fill="#80b83b"/><path d="M6 13h3v3H6z" fill="#25a4dc"/><path d="M11 13h3v3h-3z" fill="#f3bd29"/></svg></button>
    <button class="run" aria-label="Camtasia"><svg viewBox="0 0 20 20"><rect width="20" height="20" rx="3" fill="#201344"/><path d="M14 5q-3-2-6 0-3 2-3 5 0 4 4 5 3 1 6-1" fill="none" stroke="#8659e8" stroke-width="3"/><path d="M14 5q-3-2-6 0-2 1-3 4" fill="none" stroke="#ed7249" stroke-width="3"/><path d="M10 7l5 3-5 3z" fill="#f2863e"/></svg></button>
    <button class="run" aria-label="Recorder"><svg viewBox="0 0 20 20"><rect width="20" height="20" rx="3" fill="#2a1263"/><path d="M3 6h8q3 1 3 4t-3 4H3zM15 8l3-2v8l-3-2z" fill="#a586f0"/><path d="M6 8v4h4V8z" fill="#35206d"/></svg></button>
    <button class="run" aria-label="Settings"><svg viewBox="0 0 16 16"><g color="#6f7d89"><use href="#gear"/></g><circle cx="8" cy="8" r="3" fill="#2268ae"/><circle cx="8" cy="8" r="1.400" fill="#d8e4ee"/></svg></button>
    <button class="run" aria-label="Everything"><svg viewBox="0 0 20 20"><circle cx="11" cy="8" r="5.500" fill="none" stroke="#d87922" stroke-width="3.500"/><path d="M7 12l-5 6" stroke="#b95f16" stroke-width="4"/></svg></button>
    <button class="run act" aria-label="Civil 3D"><svg viewBox="0 0 20 20"><rect x="1" width="18" height="20" rx="2" fill="#9e126a"/><path d="M1 15h18v4q0 1-2 1H3q-2 0-2-1z" fill="#6d0b49"/><path d="M13 4.500q-4-2-6 1-1 5 3 5 2 0 3-1" fill="none" stroke="#fff" stroke-width="2"/><path d="M5 17h10" stroke="#ddd" stroke-dasharray="2 1"/></svg></button>
  </div>
  <div class="tray">
    <button aria-label="Hidden icons"><svg viewBox="0 0 16 16"><path d="M4 10l4-4 4 4" fill="none" stroke="#222" stroke-width="1.600"/></svg></button>
    <button aria-label="Camera off"><svg viewBox="0 0 16 16"><path d="M2 8q6-7 12 0-6 6-12 0zM6 8a2 2 0 0 0 4 0" fill="#555"/><path d="M2 2l12 12" stroke="#222" stroke-width="1.500"/></svg></button>
    <button aria-label="Sync"><svg viewBox="0 0 16 16"><path d="M2 7q2-6 9-4M13 1v4H9" fill="none" stroke="#3b6250" stroke-width="1.600"/><path d="M2 10v4h4" fill="none" stroke="#333" stroke-width="1.500"/><circle cx="11" cy="11" r="4" fill="#dc1f26"/></svg></button>
    <button aria-label="Microphone"><svg viewBox="0 0 16 16"><rect x="6" y="1" width="4.500" height="8.500" rx="2.200" fill="none" stroke="#444" stroke-width="1.200"/><path d="M3.500 8q1 4 4.700 4T13 8M8.200 12v3" fill="none" stroke="#444" stroke-width="1.200"/></svg></button>
    <button class="eng">ENG</button>
    <button class="net" aria-label="Network"><svg viewBox="0 0 16 16"><g fill="none" stroke="#333" stroke-width="1.200"><circle cx="8" cy="8" r="6.500"/><ellipse cx="8" cy="8" rx="3" ry="6.500"/><path d="M2 6h12M2 10h12"/><circle cx="12" cy="12" r="3" fill="#d2d3d1"/><path d="M10 14l4-4"/></g></svg></button>
    <button class="net" aria-label="Volume"><svg viewBox="0 0 16 16"><path d="M1 6h3l3-3v10l-3-3H1zM9 6q2 2 0 4M11 4q4 4 0 8M13.500 2.500q4 5 0 11" fill="none" stroke="#333" stroke-width="1.200"/></svg></button>
    <button class="net" aria-label="Battery"><svg viewBox="0 0 16 16"><path d="M2 5h12v8H2zM14 7h2v4h-2zM1 2v4M4 1v4" fill="#222" stroke="#222" stroke-width="1.200"/></svg></button>
    <button class="time"><span>3:22 PM</span><span>11/8/2025</span></button>
    <button aria-label="Notifications"><svg viewBox="0 0 16 16"><path d="M2 12l2-3V5q1-3 5-3l4 2v5l2 3zM6 13h4v2H6z" fill="#222"/><path d="M9 1h6M11 5h4l-4 3h4" stroke="#222" fill="none"/></svg></button>
  </div>
</footer>
</body>
</html>
```

FILE: styles.css
```css
* { box-sizing: border-box; }
html, body { height: 100%; }
body {
  margin: 0;
  display: flex;
  flex-direction: column;
  overflow: hidden;
  position: relative;
  background: #1f2422;
  color: #c8cdcb;
  font: 10px/16px "Open Sans", "Noto Sans", sans-serif;
}
button, input, select {
  font: inherit;
  color: inherit;
  background: none;
  border: 0;
  border-radius: 0;
  padding: 0;
  margin: 0;
  white-space: nowrap;
}
select { appearance: none; width: 100%; outline: 0; }
button { display: flex; align-items: center; justify-content: center; flex: none; }
svg { width: 14px; height: 14px; flex: none; display: block; }
h1, h2, p, ul { margin: 0; padding: 0; font: inherit; list-style: none; }
.defs { position: absolute; width: 0; height: 0; }

.titlebar { display: flex; align-items: center; height: 24px; padding-left: 12px; color: #dfe3e2; flex: none; }
.logo { width: 20px; height: 18px; background: #a3105f; border-left: 3px solid #d4408f; color: #fff; font-weight: 700; font-size: 11px; line-height: 14px; }
.cr { width: 10px; }
.cr svg, .sc { width: 7px; height: 7px; }
.cr.wide { width: 14px; }
.quick { display: flex; margin-left: 3px; }
.quick button, .ib { width: 20px; }
.dim { color: #656c6d; }
.space { display: flex; align-items: center; width: 147px; height: 17px; background: #30383b; padding: 0 2px; gap: 1px; }
.share { color: #9fc6dd; gap: 5px; margin-left: 3px; }
.share svg { width: 13px; height: 13px; }
.titlebar h1 { display: flex; gap: 9px; margin-left: 51px; flex: 1; white-space: nowrap; color: #e7eae9; }
.rt { width: 8px; height: 8px; margin-right: 3px; }
.find { width: 147px; height: 17px; padding-left: 2px; background: #3f4755; }
.find::placeholder { color: #aab0b8; font-style: italic; opacity: 1; }
.sign { gap: 4px; }
.sign .sc { margin-left: 36px; margin-right: 4px; }
.bar { width: 1px; height: 12px; margin: 0 4px; background: #3a4140; }
.win { display: flex; margin-left: 48px; }
.win button { width: 39px; }
.win svg, .docwin svg { width: 11px; height: 11px; }
.notch { position: absolute; top: 0; left: 33.700%; right: 32.500%; height: 5px; background: #f7f9f8; border-radius: 0 0 6px 6px; }

.menus {
  display: grid;
  height: 18px;
  padding-left: 9px;
  flex: none;
  align-items: center;
  grid-template-columns: 33fr 34fr 38fr 42fr 47fr 38fr 39fr 50fr 67fr 48fr 52fr 67fr 49fr 58fr 54fr 36fr 58fr 43fr 54fr 49fr 50fr 48fr 126fr 81fr;
}
.menus > *, .ribtabs > button { min-width: 0; justify-content: flex-start; }
.docwin { display: flex; }
.docwin button { width: 27px; }
.menus2 { display: flex; height: 17px; padding-left: 6px; border-bottom: 1px solid #2f3433; flex: none; }

.ribtabs {
  display: grid;
  height: 19px;
  padding-left: 10px;
  flex: none;
  grid-template-columns: 43fr 40fr 57fr 48fr 50fr 37fr 51fr 46fr 46fr 33fr 67fr 62fr 68fr 37fr 50fr 74fr 79fr 45fr 52fr 275fr;
}
.ribtabs > button { padding-top: 2px; }
.ribtabs .on { background: #12a0d0; color: #e4f6fc; justify-content: center; }
.ribtabs .more { padding-left: 17px; }
.ribtabs .more svg { width: 22px; height: 8px; }

.ribbon { height: 85px; flex: none; background: #373f42; border: 1px solid #2d6170; border-width: 1px 0 1px 1px; color: #dde1e0; }
.tools { display: flex; gap: 7px; padding: 3px 0 0 2px; }
.inq { flex-direction: column; }
.inq svg { width: 26px; height: 28px; }
.inq { height: 63px; padding-top: 1px; }
.inq { justify-content: flex-start; gap: 2px; }
.list { display: flex; flex-direction: column; align-items: flex-start; height: 64px; }
.list button { height: 21px; gap: 5px; padding-bottom: 2px; }
.list svg { width: 12px; height: 12px; }
.gt { margin-left: 29px; gap: 4px; }
.gt svg { width: 8px; height: 8px; }

.filetabs { display: flex; height: 21px; flex: none; align-items: center; }
.bg { width: 38px; }
.bg svg { height: 12px; }
.sl { width: 1px; height: 12px; background: #545b5c; transform: skewX(-20deg); flex: none; }
.filetabs > button { margin-right: 9px; }
.filetabs > .bg { margin-right: 0; }
.filetabs .sl + button { margin-left: 8px; }
.filetabs .d1 { margin-right: 14px; }
.cur, .model { background: #3b4447; color: #fff; font-weight: 600; clip-path: polygon(8px 0, 100% 0, calc(100% - 8px) 100%, 0 100%); }
.cur { display: flex; height: 21px; gap: 5px; padding: 0 10px 0 10px; }
.cur svg { width: 9px; height: 9px; }
.add svg { width: 12px; height: 12px; }

.work { flex: 1; min-height: 0; display: flex; background: #373f42; border-top: 2px solid #3f4649; }
.toolspace { width: 181px; flex: none; display: flex; flex-direction: column; padding: 3px 0 8px; }
h2 { background: #252a2b; height: 16px; padding-left: 12px; color: #d5d9d8; border-left: 0; position: relative; }
h2::before { content: ""; position: absolute; left: 6px; top: 5px; height: 6px; border-left: 1px dotted #9aa2a4; }
.tsbar { display: flex; height: 27px; align-items: center; gap: 7px; padding: 0 4px 0 3px; }
.tsbar .r { margin-left: auto; }
.tsview { display: flex; align-items: center; height: 15px; background: #f7f7f7; color: #333; padding: 0 2px; margin: 0 1px 2px 0; font-size: 9px; }
.tsview svg { width: 8px; height: 8px; }
.treebox { flex: 1; min-height: 0; background: #fcfcfc; position: relative; overflow: hidden; border-bottom: 1px solid #aaa; color: #111; font-size: 9px; padding-top: 1px; }
.tree { padding-left: 6px; position: relative; border-right: 14px solid #f0f0f0; }
.tree::before { content: ""; position: absolute; left: 27px; top: 16px; height: 264px; border-left: 1px solid #bbb; }
.tree::after { content: ""; position: absolute; left: 11px; top: 12px; height: 272px; border-left: 1px solid #bbb; }
.tree li { display: flex; align-items: center; height: 16px; gap: 5px; padding-left: 31px; white-space: nowrap; }
.tree li.root { padding-left: 0; }
.tree li.k { padding-left: 16px; }
.tree li.k .tg { margin-right: 1px; }
.tree svg { width: 13px; height: 13px; }
.tree .b { font-weight: 700; color: #000; }
.tg { width: 9px; height: 9px; border: 1px solid #aaa; background: #fff; font: 9px/7px "DejaVu Sans", sans-serif; color: #555; z-index: 1; }
.tree .root .tg { margin-left: 1px; }
.vbar { position: absolute; right: 8px; top: 15px; height: 69%; border-left: 2px solid #777; }
.hbar { position: absolute; left: 15px; bottom: 6px; width: 71%; border-top: 2px solid #777; }
.preview { height: 63px; margin-top: 4px; border: 1px solid #687073; }

.vtabs { display: flex; flex-direction: column; padding: 22px 0 24px; flex: none; }
.vtabs button { writing-mode: vertical-rl; transform: rotate(180deg); flex: 1; background: #262b2d; color: #9fa6a8; width: 18px; }
.vtabs .on { background: #373f42; color: #bcc2c3; }
.vtabs.left { width: 22px; border-right: 2px solid #485053; }
.vtabs.right { width: 23px; padding-left: 4px; }

.center { flex: 1; min-width: 0; display: flex; flex-direction: column; }
.top { flex: 1; min-height: 0; display: flex; }
.canvas { flex: 1; min-width: 0; position: relative; background: #1f2420; }
.drawing { position: absolute; width: 100%; height: 100%; }
.vp { position: relative; display: flex; padding: 3px 2px; color: #c9cecc; }
.drawing text { text-anchor: middle; }
.compass text { font: 700 12px "Liberation Sans", sans-serif; fill: #ccd0ce; }
.drawing .cube { font: 700 8px "Liberation Sans", sans-serif; fill: #53605f; }
.drawing .wcs { font: 9px "Liberation Sans", sans-serif; fill: #666a6d; }

.vt { width: 23px; background: #2f373a; border-right: 3px solid #373f42; display: flex; flex-direction: column; align-items: center; justify-content: space-between; padding: 2px 0 5px; overflow: hidden; }
.vt + .vt { padding-bottom: 1px; }
.vt i { height: 2px; width: 17px; background: #cbd0d0; flex: none; }
.vt .g { width: 12px; height: 4px; }

.cmd { display: flex; height: 54px; padding: 2px 0 2px; flex: none; }
.side { width: 20px; background: #262b2d; display: flex; flex-direction: column; align-items: center; gap: 7px; padding-top: 3px; color: #eee; }
.side .g { width: 14px; height: 5px; }
.side button svg { width: 13px; height: 13px; }
.side button:nth-child(2) svg { width: 10px; height: 10px; }
.lines { flex: 1; display: flex; flex-direction: column; font: 10px/13px "DejaVu Sans Mono", "Liberation Mono", monospace; color: #222; background: #fff; }
.log { flex: 1; background: #d1d3d1; padding: 5px 2px 0; border-bottom: 1px solid #8c8c8c; }
.in { height: 18px; display: flex; align-items: center; gap: 2px; padding-left: 3px; color: #444; }
.in .term { width: 15px; height: 11px; }
.in input { flex: 1; padding-left: 2px; font-style: italic; }
.in input::placeholder { color: #777; opacity: 1; }

.props { width: 22%; max-width: 259px; flex: none; padding-top: 3px; border-right: 2px solid #262b2d; }
.sel { display: flex; align-items: center; gap: 5px; margin: 12px 5px 4px 5px; }
.sel label { flex: 1; display: flex; align-items: center; height: 17px; background: #444e58; color: #cfd5d8; padding: 0 3px 0 1px; margin-right: 2px; }
.props table { width: 236px; margin-left: 9px; border-collapse: collapse; table-layout: fixed; }
.c1 { width: 14px; }
.c2 { width: 101px; }
.props tr { height: 17px; }
.props td, .props th { padding: 0; text-align: left; font-weight: 400; line-height: 16px; border-bottom: 1px solid #323a3d; }
.props th { padding-left: 5px; }
.props td + th { border-left: 1px solid #30383b; }
.props td:last-child { border-left: 1px solid #30383b; padding-left: 2px; color: #dce0df; }
.props td.lt:last-child { padding-left: 60px; }
.props td.off:last-child { color: #7f8789; }
.props .hd th { background: #252a2b; font-weight: 600; color: #eceeed; height: 18px; padding-left: 5px; }
.hd svg { width: 9px; height: 9px; float: right; margin: 4px 4px 0 0; }
.props tr.last { height: 22px; }
.props .last td, .props .last th { padding-bottom: 4px; }

.ctx { position: absolute; left: 528px; top: 353px; width: 144px; padding: 1px 2px 2px; background: #f1f1f1; border: 1px solid #fff; color: #222; }
.ctx button { width: 100%; height: 17px; justify-content: flex-start; padding: 0 4px 0 20px; }
.ctx .on { background: #0c78d0; color: #e4f1fb; }
.ctx svg { width: 12px; height: 12px; margin: 0 5px 0 -17px; }
.ctx .ov svg { margin-right: 3px; }
.ctx b { margin-left: auto; border: 3px solid transparent; border-left: 4px solid #111; border-right: 0; }
.ctx hr { height: 1px; margin: 3px 1px; border: 0; background: #c3c6c8; }
.cursor { position: absolute; left: 572px; top: 369px; width: 10px; height: 14px; }

.status { height: 24px; flex: none; display: flex; justify-content: space-between; color: #d5d9d8; border-bottom: 0; }
.layouts { display: flex; align-items: center; padding-bottom: 2px; }
.layouts .model { height: 22px; width: 50px; margin-right: 7px; }
.layouts .sl { margin: 0 9px; background: #454c4d; }
.sb { display: flex; gap: 2px; }
.sb div { display: flex; background: #2d3437; height: 22px; }
.sb button { width: 20px; }
.sb .c { width: 13px; }
.sb .c svg { width: 7px; height: 7px; }
.sb .pl svg { width: 12px; height: 12px; }
.sb .txt { width: 37px; color: #e8ebea; }
.sb .ratio { width: 18px; }
.sb .hl { background: #568cc0; }

.taskbar { height: 40px; flex: none; position: relative; display: flex; justify-content: space-between; align-items: center; background: #cbccca; border-top: 4px solid #eceeec; color: #222; }
.res { position: absolute; left: 0; top: -2px; width: 82px; height: 22px; z-index: 1; background: #3d3c37; color: #f1f1ef; font-size: 12px; line-height: 21px; text-align: center; }
.widget { position: absolute; left: 17px; top: 18px; width: 20px; height: 9px; }
.apps { display: flex; align-items: center; margin-left: 339px; height: 34px; }
.apps button { width: 36px; height: 32px; position: relative; }
.apps button svg { width: 20px; height: 20px; }
.search { display: flex; align-items: center; gap: 9px; width: 180px; height: 26px; margin: 0 4px; padding-left: 8px; border-radius: 13px; background: #e0e1df; font-size: 11px; color: #333; }
.search input { width: 120px; }
.search input::placeholder { color: #555; opacity: 1; }
.run::after { content: ""; position: absolute; bottom: 0; width: 5px; height: 2px; background: #777; border-radius: 1px; }
.act { background: #dcdcda; border-radius: 3px; }
.run.act::after { width: 12px; background: #333; }
.tray { display: flex; align-items: center; margin-right: 13px; }
.tray button { width: 26px; }
.tray button:last-child { width: 20px; }
.tray .eng { width: 37px; }
.tray .net { width: 20px; }
.tray .time { width: 62px; flex-direction: column; align-items: flex-end; line-height: 13px; padding-right: 3px; }
```
